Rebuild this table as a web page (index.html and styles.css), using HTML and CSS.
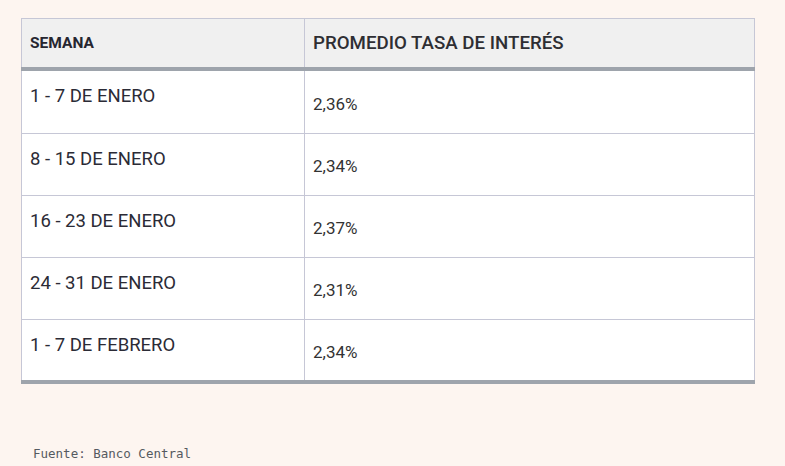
FILE: index.html
```html
<!DOCTYPE html>
<html lang="es">
<head>
<meta charset="utf-8">
<title>Tasa de interés</title>
<link rel="stylesheet" href="styles.css">
</head>
<body>
<main class="page">
  <table class="rates">
    <colgroup>
      <col class="col-week">
      <col class="col-rate">
    </colgroup>
    <thead>
      <tr>
        <th class="th-week">SEMANA</th>
        <th class="th-rate">PROMEDIO TASA DE INTERÉS</th>
      </tr>
    </thead>
    <tbody>
      <tr><td class="week">1 - 7 DE ENERO</td><td class="rate">2,36%</td></tr>
      <tr><td class="week">8 - 15 DE ENERO</td><td class="rate">2,34%</td></tr>
      <tr><td class="week">16 - 23 DE ENERO</td><td class="rate">2,37%</td></tr>
      <tr><td class="week">24 - 31 DE ENERO</td><td class="rate">2,31%</td></tr>
      <tr><td class="week">1 - 7 DE FEBRERO</td><td class="rate">2,34%</td></tr>
    </tbody>
  </table>
  <p class="source">Fuente: Banco Central</p>
</main>
</body>
</html>
```

FILE: styles.css
```css
html, body {
  margin: 0;
  padding: 0;
  background: #fdf5f0;
}

.page {
  padding: 18px 0 0 21px;
}

.rates {
  width: 734px;
  border-collapse: collapse;
  table-layout: fixed;
  font-family: "Roboto", "Noto Sans", sans-serif;
  color: #2b2b36;
  background: #ffffff;
}

.col-week { width: 283px; }

.rates th,
.rates td {
  border: 1px solid #c6c7d6;
  text-align: left;
  padding: 0 0 0 8px;
}

.rates thead th {
  background: #f0f0f0;
  height: 48px;
  border-bottom: 4px solid #9ea4ac;
  vertical-align: middle;
}

.th-week {
  font-size: 15.5px;
  font-weight: 700;
  color: #262630;
}

.th-rate {
  font-size: 18.7px;
  font-weight: 500;
  color: #2e2e33;
}

.rates td {
  height: 62px;
  box-sizing: border-box;
}

.rates tbody tr:first-child td {
  height: 64px;
}

.rates tbody tr:last-child td {
  height: 63px;
  border-bottom: 4px solid #9ea4ac;
}

.week {
  font-size: 18.5px;
  vertical-align: top;
  padding-top: 14px !important;
}

.rate {
  font-size: 17px;
  vertical-align: middle;
  padding-top: 4px !important;
  color: #333333;
}

.source {
  margin: 62px 0 0 12px;
  font-family: "DejaVu Sans Mono", "Liberation Mono", monospace;
  font-size: 12.5px;
  color: #555a60;
}
```
